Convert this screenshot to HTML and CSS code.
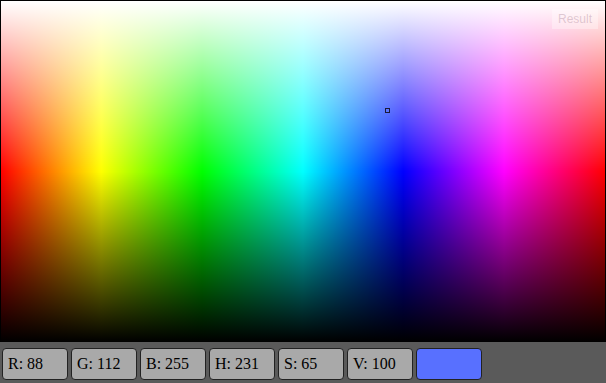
FILE: index.html
```html
<!DOCTYPE html>
<html lang="en">
    <head>
        <meta charset="UTF-8">
        <meta name="viewport" content="width=device-width, initial-scale=1.0">
        <title>Color picker</title>
        <link rel="stylesheet" href="styles.css">
    </head>
    <body>
        <div class="picker">
            <div class="palette">
                <div class="shade"></div>
                <span class="marker"></span>
                <span class="result">Result</span>
            </div>
            <div class="values">
                <div class="field">R: 88</div>
                <div class="field">G: 112</div>
                <div class="field">B: 255</div>
                <div class="field">H: 231</div>
                <div class="field">S: 65</div>
                <div class="field">V: 100</div>
                <div class="field swatch"></div>
            </div>
        </div>
    </body>
</html>
```
FILE: styles.css
```css
body {
    margin: 0;
    font-family: "Liberation Serif", "Times New Roman", serif;
}
.picker {
    width: 606px;
    height: 383px;
    display: flex;
    flex-direction: column;
    background: #5a5a5a;
}
.palette {
    position: relative;
    height: 341px;
    border: 1px solid #000;
    border-bottom: none;
    background: linear-gradient(to right, #f00 0%, #ff0 16.6%, #0f0 33.3%, #0ff 50%, #00f 66.6%, #f0f 83.3%, #f00 100%);
}
.shade {
    height: 100%;
    background: linear-gradient(to bottom, #fff 0%, rgba(255, 255, 255, 0) 50%, rgba(0, 0, 0, 0) 50%, #000 100%);
}
.marker {
    position: absolute;
    left: 384px;
    top: 107px;
    width: 3px;
    height: 3px;
    border: 1px solid #1a1a3a;
}
.result {
    position: absolute;
    right: 7px;
    top: 8px;
    padding: 3px 6px;
    font-family: "Liberation Sans", Arial, sans-serif;
    font-size: 12px;
    color: rgba(160, 120, 140, 0.35);
    background: rgba(255, 255, 255, 0.35);
}
.values {
    display: flex;
    gap: 3px;
    padding: 6px 2px 3px;
}
.field {
    width: 59px;
    height: 30px;
    line-height: 30px;
    padding-left: 5px;
    font-size: 16px;
    background: #a9a9a9;
    border: 1px solid #222;
    border-radius: 4px;
}
.swatch {
    background: #5870ff;
}
```
